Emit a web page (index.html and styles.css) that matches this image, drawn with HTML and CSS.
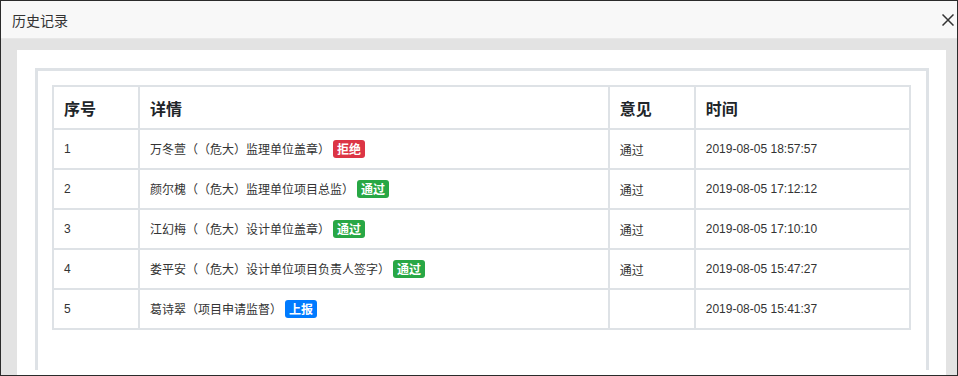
FILE: index.html
```html
<!DOCTYPE html>
<html lang="zh-CN">
<head>
<meta charset="utf-8">
<title>历史记录</title>
<link rel="stylesheet" href="styles.css">
</head>
<body>
<div class="dialog">
  <div class="dialog-header">
    <span class="dialog-title">历史记录</span>
    <span class="dialog-close" aria-label="关闭">
      <svg width="12" height="12" viewBox="0 0 12 12"><path d="M0.5 0.5 L11.5 11.5 M11.5 0.5 L0.5 11.5" stroke="#333" stroke-width="1.5" fill="none"/></svg>
    </span>
  </div>
  <div class="dialog-body">
    <div class="panel">
      <div class="box">
        <table class="history">
          <thead>
            <tr>
              <th class="c-no">序号</th>
              <th class="c-detail">详情</th>
              <th class="c-opinion">意见</th>
              <th class="c-time">时间</th>
            </tr>
          </thead>
          <tbody>
            <tr>
              <td>1</td>
              <td class="detail">万冬萱（（危大）监理单位盖章）<span class="badge badge-danger">拒绝</span></td>
              <td class="detail">通过</td>
              <td>2019-08-05 18:57:57</td>
            </tr>
            <tr>
              <td>2</td>
              <td class="detail">颜尔槐（（危大）监理单位项目总监）<span class="badge badge-success">通过</span></td>
              <td class="detail">通过</td>
              <td>2019-08-05 17:12:12</td>
            </tr>
            <tr>
              <td>3</td>
              <td class="detail">江幻梅（（危大）设计单位盖章）<span class="badge badge-success">通过</span></td>
              <td class="detail">通过</td>
              <td>2019-08-05 17:10:10</td>
            </tr>
            <tr>
              <td>4</td>
              <td class="detail">娄平安（（危大）设计单位项目负责人签字）<span class="badge badge-success">通过</span></td>
              <td class="detail">通过</td>
              <td>2019-08-05 15:47:27</td>
            </tr>
            <tr>
              <td>5</td>
              <td class="detail">葛诗翠（项目申请监督）<span class="badge badge-primary">上报</span></td>
              <td class="detail"></td>
              <td>2019-08-05 15:41:37</td>
            </tr>
          </tbody>
        </table>
      </div>
    </div>
  </div>
</div>
</body>
</html>
```

FILE: styles.css
```css
* { box-sizing: border-box; }
html, body { margin: 0; padding: 0; }
body {
  font-family: "Liberation Sans", "Noto Sans CJK SC", sans-serif;
  color: #333;
  background: #fff;
  text-spacing-trim: space-all;
}
.dialog {
  width: 958px;
  height: 376px;
  border: 1px solid #2b2b2b;
  display: flex;
  flex-direction: column;
  overflow: hidden;
  background: #e3e3e3;
}
.dialog-header {
  height: 38px;
  flex: none;
  background: #f8f8f8;
  border-bottom: 1px solid #e8e8e8;
  display: flex;
  align-items: center;
  justify-content: space-between;
  padding: 0 3px 0 11px;
}
.dialog-title {
  font-family: "Noto Sans CJK SC", sans-serif;
  font-size: 14px;
  color: #333;
}
.dialog-close {
  display: flex;
  width: 12px;
  height: 12px;
  margin-top: 1px;
}
.dialog-body {
  flex: 1;
  padding: 11px 11px 0 16px;
  display: flex;
  min-height: 0;
}
.panel {
  flex: 1;
  background: #fff;
  padding: 18px 17px 0 18px;
}
.box {
  border: 3px solid #dee2e6;
  border-bottom: none;
  padding: 14px 15px 40px 14px;
}
.history {
  width: 100%;
  table-layout: fixed;
  border-collapse: separate;
  border-spacing: 0;
  border-top: 2px solid #dee2e6;
  border-left: 2px solid #dee2e6;
}
.history th, .history td {
  border-right: 2px solid #dee2e6;
  border-bottom: 2px solid #dee2e6;
  padding: 0 10px;
  text-align: left;
  vertical-align: middle;
  white-space: nowrap;
}
.history th {
  height: 43px;
  font-family: "Noto Sans CJK SC", sans-serif;
  font-size: 16px;
  font-weight: 700;
  color: #212529;
  padding-top: 1px;
}
.history td {
  height: 40px;
  font-size: 12px;
  color: #333;
}
.history td.detail {
  font-family: "Noto Sans CJK SC", sans-serif;
}
.c-no { width: 86px; }
.c-detail { width: 469px; }
.c-opinion { width: 86px; }
.c-time { width: 215px; }
.badge {
  display: inline-block;
  margin-left: 3px;
  padding: 2px 4px;
  font-family: "Noto Sans CJK SC", sans-serif;
  font-size: 12px;
  font-weight: 700;
  line-height: 14px;
  color: #fff;
  border-radius: 3px;
  vertical-align: 0;
}
.badge-danger { background: #dc3545; }
.badge-success { background: #28a745; }
.badge-primary { background: #007bff; }
```
